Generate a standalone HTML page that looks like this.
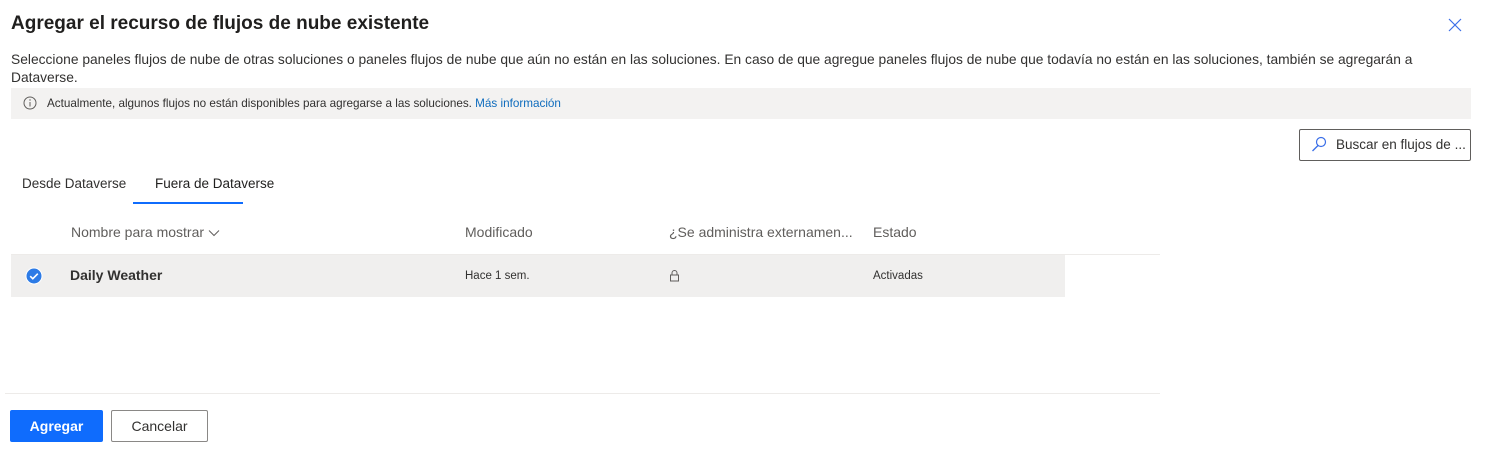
<!DOCTYPE html>
<html><head><meta charset="utf-8"><style>
body{margin:0;width:1487px;height:462px;background:#fff;font-family:"Liberation Sans",sans-serif;color:#323130;position:relative;overflow:hidden}
.a{position:absolute;white-space:nowrap}
</style></head><body>
<div class="a" style="left:11px;top:13px;font-size:19px;font-weight:600;color:#201f1e">Agregar el recurso de flujos de nube existente</div>
<svg class="a" style="left:1448px;top:18px" width="14" height="14" viewBox="0 0 14 14"><path d="M1 1L13 13M13 1L1 13" stroke="#3b6fe8" stroke-width="1.2"/></svg>
<div class="a" style="left:11px;top:51px;font-size:13.8px;line-height:18px;white-space:normal;width:1410px;color:#323130">Seleccione paneles flujos de nube de otras soluciones o paneles flujos de nube que aún no están en las soluciones. En caso de que agregue paneles flujos de nube que todavía no están en las soluciones, también se agregarán a Dataverse.</div>
<div class="a" style="left:11px;top:88px;width:1460px;height:31px;background:#f3f2f1"></div>
<svg class="a" style="left:23px;top:96px" width="14" height="14" viewBox="0 0 14 14"><circle cx="7" cy="7" r="6" fill="none" stroke="#605e5c"/><path d="M7 6v4.5" stroke="#605e5c"/><circle cx="7" cy="4" r=".7" fill="#605e5c"/></svg>
<div class="a" style="left:47px;top:97px;font-size:11.7px;color:#323130">Actualmente, algunos flujos no están disponibles para agregarse a las soluciones. <span style="color:#0f6cbd">Más información</span></div>
<div class="a" style="left:1299px;top:129px;width:170px;height:30px;border:1px solid #605e5c;border-radius:2px"></div>
<svg class="a" style="left:1311px;top:136px" width="16" height="16" viewBox="0 0 16 16"><circle cx="10" cy="6" r="4.5" fill="none" stroke="#3b6fe8" stroke-width="1.2"/><path d="M7 9.5L1.5 15" stroke="#3b6fe8" stroke-width="1.3"/></svg>
<div class="a" style="left:1336px;top:137px;font-size:13.5px;color:#323130">Buscar en flujos de ...</div>
<div class="a" style="left:22px;top:176px;font-size:13.5px;color:#323130">Desde Dataverse</div>
<div class="a" style="left:155px;top:176px;font-size:13.5px;color:#201f1e">Fuera de Dataverse</div>
<div class="a" style="left:133px;top:202px;width:110px;height:2px;background:#0f6cfd"></div>
<div class="a" style="left:71px;top:224px;font-size:14px;color:#605e5c">Nombre para mostrar <svg width="12" height="8" viewBox="0 0 12 8"><path d="M1 1.5l5 5 5-5" fill="none" stroke="#605e5c"/></svg></div>
<div class="a" style="left:465px;top:224px;font-size:14px;color:#605e5c">Modificado</div>
<div class="a" style="left:669px;top:224px;font-size:14px;color:#605e5c">¿Se administra externamen...</div>
<div class="a" style="left:873px;top:224px;font-size:14px;color:#605e5c">Estado</div>
<div class="a" style="left:11px;top:254px;width:1149px;height:1px;background:#edebe9"></div>
<div class="a" style="left:11px;top:255px;width:1054px;height:42px;background:#f0efee"></div>
<svg class="a" style="left:25px;top:267px" width="18" height="18" viewBox="0 0 18 18"><circle cx="9" cy="9" r="8" fill="#2d7be6" stroke="#fff" stroke-width="1"/><path d="M5.2 9.2l2.6 2.5 5-5" fill="none" stroke="#fff" stroke-width="1.6"/></svg>
<div class="a" style="left:70px;top:267px;font-size:14px;font-weight:600;color:#323130">Daily Weather</div>
<div class="a" style="left:465px;top:270px;font-size:11.5px;color:#323130">Hace 1 sem.</div>
<svg class="a" style="left:669px;top:269px" width="11" height="13" viewBox="0 0 11 13"><path d="M3 6V4a2.5 2.5 0 015 0v2" fill="none" stroke="#605e5c"/><rect x="1.5" y="6" width="8" height="6" fill="none" stroke="#605e5c"/></svg>
<div class="a" style="left:873px;top:270px;font-size:11.5px;color:#323130">Activadas</div>
<div class="a" style="left:5px;top:393px;width:1155px;height:1px;background:#edebe9"></div>
<div class="a" style="left:10px;top:410px;width:93px;height:32px;background:#0f6cfd;border-radius:2px;color:#fff;font-size:14px;font-weight:600;text-align:center;line-height:32px">Agregar</div>
<div class="a" style="left:111px;top:410px;width:95px;height:30px;border:1px solid #8a8886;border-radius:2px;font-size:14px;text-align:center;line-height:30px;color:#323130">Cancelar</div>
</body></html>
